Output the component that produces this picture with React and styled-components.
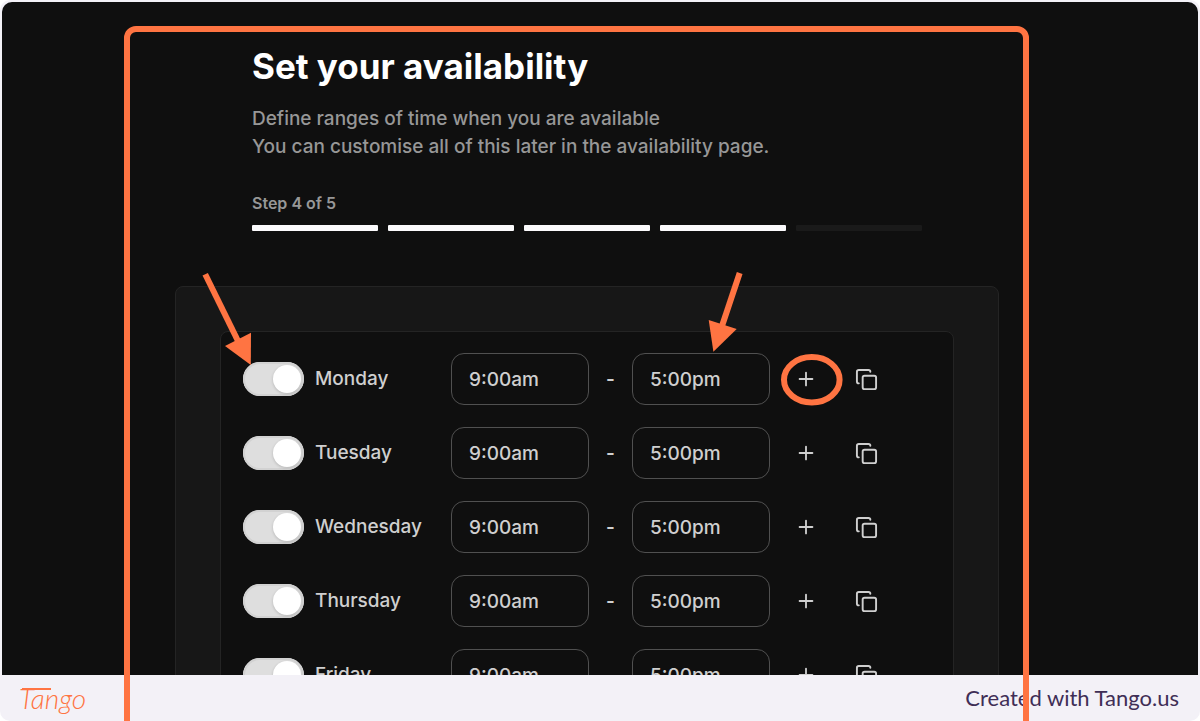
import React, { useState } from "react";
import styled, { createGlobalStyle, css } from "styled-components";
import { Copy, Plus } from "lucide-react";

const orange = "#ff7442";

const GlobalStyle = createGlobalStyle`
  * {
    box-sizing: border-box;
  }
  body {
    margin: 0;
    background: #fff;
    font-family: Inter, "Liberation Sans", sans-serif;
  }
  h1, p {
    margin: 0;
  }
`;

const center = css`
  display: flex;
  align-items: center;
  justify-content: center;
`;

const Frame = styled.div`
  position: relative;
  display: flex;
  flex-direction: column;
  height: 100vh;
  padding: 2px 2px 0;
  overflow: hidden;
  border-radius: 10px;
  background: #f3f1f7;
`;

const Screen = styled.main`
  flex: 1;
  min-height: 0;
  padding: 42px 26px 0 0;
  overflow: hidden;
  border-radius: 10px 10px 0 0;
  background: #0f0f0f;
`;

const Content = styled.div`
  position: relative;
  max-width: 824px;
  margin: 0 auto;
`;

const Header = styled.header`
  max-width: 670px;
  margin: 0 auto 55px;
`;

const Title = styled.h1`
  margin-bottom: 17px;
  color: #fff;
  font-size: 35px;
  font-weight: 700;
  line-height: 44px;
`;

const Subtitle = styled.p`
  color: #979797;
  font-size: 19px;
  font-weight: 500;
  line-height: 28px;
`;

const StepLabel = styled.p`
  margin: 32px 0 12px;
  color: #979797;
  font-size: 16px;
  font-weight: 600;
  line-height: 20px;
`;

const Steps = styled.div`
  display: grid;
  grid-template-columns: repeat(5, 1fr);
  gap: 10px;
`;

const Step = styled.div`
  height: 6px;
  border-radius: 1px;
  background: ${(props) => (props.$done ? "#fbfafc" : "#1a1a1a")};
`;

const Panel = styled.section`
  padding: 44px;
  border: 1px solid #242424;
  border-radius: 8px;
  background: #171717;
`;

const Schedule = styled.div`
  display: flex;
  flex-direction: column;
  gap: 22px;
  padding: 21px 22px;
  border: 1px solid #242424;
  border-radius: 8px;
  background: #0f0f0f;
`;

const Row = styled.div`
  display: flex;
  align-items: center;
  height: 52px;
`;

const Day = styled.label`
  display: flex;
  align-items: center;
  gap: 11px;
  width: 208px;
  color: #cfcfcf;
  font-size: 19px;
  font-weight: 500;
  line-height: 28px;
`;

const Toggle = styled.input`
  appearance: none;
  display: flex;
  align-items: center;
  justify-content: ${(props) => (props.checked ? "flex-end" : "flex-start")};
  width: 61px;
  height: 34px;
  margin: 0;
  padding: 0 3px;
  border-radius: 17px;
  background: ${(props) => (props.checked ? "#dedede" : "#3a3a3a")};
  box-shadow: inset 0 0 0 2px #d2d2d2;
  cursor: pointer;

  &::before {
    content: "";
    width: 28px;
    height: 28px;
    border-radius: 50%;
    background: #fff;
    box-shadow: 0 1px 3px rgba(0, 0, 0, 0.18);
  }
`;

const TimeInput = styled.input`
  width: 138px;
  height: 52px;
  padding: 0 17px;
  border: 1px solid #505050;
  border-radius: 13px;
  background: transparent;
  color: #cfcfcf;
  font-family: inherit;
  font-size: 19px;
  font-weight: 500;
`;

const Dash = styled.span`
  ${center}
  width: 43px;
  color: #cfcfcf;
  font-size: 19px;
  font-weight: 600;
`;

const Actions = styled.div`
  display: flex;
  gap: 10px;
  margin-left: 11px;
`;

const IconButton = styled.button`
  ${center}
  width: 50px;
  height: 50px;
  padding: 0;
  border: 0;
  background: none;
  color: #cfcfcf;
  cursor: pointer;
`;

const Footer = styled.footer`
  display: flex;
  align-items: center;
  justify-content: space-between;
  height: 46px;
  padding: 0 19px 0 17px;
`;

const Brand = styled.a`
  position: relative;
  color: ${orange};
  font-family: Lato, "Liberation Sans", sans-serif;
  font-size: 28px;
  font-style: italic;
  font-weight: 300;
  line-height: 36px;
  text-decoration: none;

  /* long crossbar of the T */
  &::before {
    content: "";
    position: absolute;
    top: 8px;
    left: 3px;
    width: 29px;
    height: 2px;
    background: ${orange};
  }
`;

const Credit = styled.p`
  color: #3f2e56;
  font-family: Lato, "Liberation Sans", sans-serif;
  font-size: 22px;
  line-height: 28px;
`;

// annotations drawn over the screen
const Highlight = styled.div`
  position: absolute;
  top: 26px;
  right: 171px;
  bottom: -20px;
  left: 124px;
  border: 6px solid ${orange};
  border-radius: 12px;
  pointer-events: none;
`;

const Marks = styled.svg`
  position: absolute;
  top: 226px;
  left: 25px;
  pointer-events: none;
`;

const days = ["Monday", "Tuesday", "Wednesday", "Thursday", "Friday"];

const DayRow = ({ day }) => {
  const [enabled, setEnabled] = useState(true);
  const [start, setStart] = useState("9:00am");
  const [end, setEnd] = useState("5:00pm");

  return (
    <Row>
      <Day>
        <Toggle
          type="checkbox"
          checked={enabled}
          onChange={(e) => setEnabled(e.target.checked)}
        />
        {day}
      </Day>
      <TimeInput
        type="text"
        aria-label={`${day} start`}
        value={start}
        onChange={(e) => setStart(e.target.value)}
      />
      <Dash>-</Dash>
      <TimeInput
        type="text"
        aria-label={`${day} end`}
        value={end}
        onChange={(e) => setEnd(e.target.value)}
      />
      <Actions>
        <IconButton type="button" aria-label={`Add time to ${day}`}>
          <Plus size={22} />
        </IconButton>
        <IconButton type="button" aria-label={`Copy ${day}`}>
          <Copy size={23} />
        </IconButton>
      </Actions>
    </Row>
  );
};

const App = () => {
  return (
    <Frame>
      <GlobalStyle />
      <Screen>
        <Content>
          <Header>
            <Title>Set your availability</Title>
            <Subtitle>
              Define ranges of time when you are available
              <br />
              You can customise all of this later in the availability page.
            </Subtitle>
            <StepLabel>Step 4 of 5</StepLabel>
            <Steps>
              {[1, 2, 3, 4, 5].map((step) => (
                <Step key={step} $done={step <= 4} />
              ))}
            </Steps>
          </Header>
          <Panel>
            <Schedule>
              {days.map((day) => (
                <DayRow key={day} day={day} />
              ))}
            </Schedule>
          </Panel>
          <Marks
            width="650"
            height="140"
            viewBox="200 270 650 140"
            fill={orange}
            stroke={orange}
            aria-hidden="true"
          >
            <path d="M205.2 274.3 238 341" strokeWidth="6" />
            <path d="M250.8 365 225 346 251 332.7Z" stroke="none" />
            <path d="M739.7 273 722 326" strokeWidth="6" />
            <path d="M713.4 351.8 708.7 320 736.7 329Z" stroke="none" />
            <ellipse cx="811.8" cy="379.8" rx="27.8" ry="22.7" fill="none" strokeWidth="6" />
          </Marks>
        </Content>
      </Screen>
      <Footer>
        <Brand href="#">Tango</Brand>
        <Credit>Created with Tango.us</Credit>
      </Footer>
      <Highlight />
    </Frame>
  );
};

export default App;
